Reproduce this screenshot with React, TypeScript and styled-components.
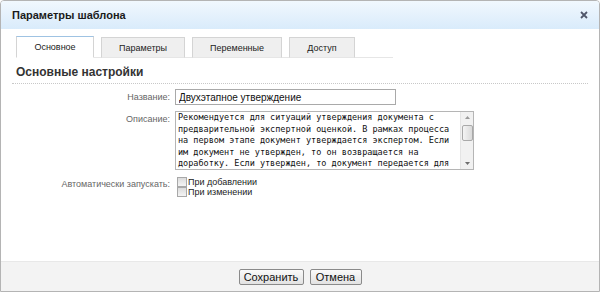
import styled, { createGlobalStyle } from 'styled-components';

const GlobalStyle = createGlobalStyle`
  html, body {
    margin: 0;
    padding: 0;
    background: #fff;
  }
  #root {
    width: 600px;
    height: 292px;
  }
`;

const Dialog = styled.div`
  box-sizing: border-box;
  width: 600px;
  height: 292px;
  display: flex;
  flex-direction: column;
  border: 1px solid #b4b4b4;
  border-radius: 4px 4px 0 0;
  overflow: hidden;
  background: #fff;
  font-family: 'Liberation Sans', Arial, sans-serif;
`;

const Header = styled.div`
  height: 28px;
  flex: none;
  display: flex;
  align-items: center;
  justify-content: space-between;
  padding: 0 10px 0 11px;
  background: linear-gradient(#f1f8fe, #d9ebfb);
`;

const Title = styled.div`
  font: bold 11px 'Liberation Sans', Arial, sans-serif;
  color: #1a1a1a;
`;

const CloseButton = styled.button`
  border: 0;
  padding: 0;
  background: none;
  width: 10px;
  height: 10px;
  display: flex;
  align-items: center;
  justify-content: center;
  cursor: pointer;
`;

const Body = styled.div`
  flex: 1;
  display: flex;
  flex-direction: column;
`;

const TabRow = styled.div`
  display: flex;
  align-items: flex-end;
  gap: 7px;
  margin: 7px 0 0 15px;
  width: 377px;
  border-bottom: 1px solid #e6e6e6;
`;

const Tab = styled.div<{ $active?: boolean; $w: number }>`
  box-sizing: border-box;
  width: ${(p) => p.$w}px;
  height: ${(p) => (p.$active ? 22 : 21)}px;
  margin-bottom: -1px;
  display: flex;
  align-items: center;
  justify-content: center;
  font-size: 9px;
  color: #222;
  background: ${(p) => (p.$active ? '#fff' : '#efefef')};
  border: 1px solid #d4d4d4;
  border-top-color: ${(p) => (p.$active ? '#9fc3e3' : '#d4d4d4')};
  border-bottom-color: ${(p) => (p.$active ? '#fff' : '#e6e6e6')};
`;

const SectionTitle = styled.h2`
  margin: 7px 11px 0;
  padding: 0 0 3px 4px;
  font: bold 12px 'Liberation Sans', Arial, sans-serif;
  color: #333;
  border-bottom: 1px dotted #c8c8c8;
  line-height: 15px;
`;

const Form = styled.div`
  display: grid;
  grid-template-columns: 169px 1fr;
  column-gap: 5px;
  row-gap: 6px;
  margin-top: 5px;
  align-items: start;
`;

const Label = styled.label`
  text-align: right;
  font-size: 9px;
  color: #666;
  line-height: 16px;
`;

const TextInput = styled.input`
  box-sizing: border-box;
  width: 221px;
  height: 16px;
  margin: 0;
  padding: 0 3px;
  border: 1px solid #a9a9a9;
  font: 10px 'Liberation Sans', Arial, sans-serif;
  color: #111;
  outline: none;
`;

const AreaWrap = styled.div`
  position: relative;
  width: 299px;
  height: 59px;
`;

const TextArea = styled.textarea`
  box-sizing: border-box;
  display: block;
  width: 100%;
  height: 100%;
  margin: 0;
  padding: 0 15px 0 2px;
  border: 1px solid #b5b5b5;
  font: 8.5px/11.6px 'DejaVu Sans Mono', 'Liberation Mono', monospace;
  color: #111;
  resize: none;
  outline: none;
  overflow: hidden;
`;

const ScrollTrack = styled.div`
  position: absolute;
  top: 1px;
  right: 1px;
  bottom: 1px;
  width: 12px;
  display: flex;
  flex-direction: column;
  align-items: center;
  background: #f1f1f1;
  border-left: 1px solid #e4e4e4;
`;

const ScrollArrow = styled.div`
  flex: none;
  height: 11px;
  width: 100%;
  display: flex;
  align-items: center;
  justify-content: center;
`;

const ScrollThumb = styled.div`
  box-sizing: border-box;
  flex: none;
  width: 11px;
  height: 16px;
  margin-top: 2px;
  border: 1px solid #a9a9a9;
  border-radius: 2px;
  background: linear-gradient(90deg, #f4f4f4, #dadada);
`;

const ScrollGap = styled.div`
  flex: 1;
`;

const Checks = styled.div`
  display: flex;
  flex-direction: column;
  padding-top: 1px;
`;

const CheckLabel = styled.label`
  display: flex;
  align-items: center;
  height: 10px;
  font-size: 9px;
  color: #222;
`;

const Box = styled.input`
  appearance: none;
  box-sizing: border-box;
  width: 10px;
  height: 10px;
  margin: 0 1px 0 2px;
  border: 1px solid #a8a8a8;
  background: linear-gradient(#dcdcdc, #f4f4f4);
`;

const Footer = styled.div`
  flex: none;
  height: 29px;
  display: flex;
  align-items: center;
  justify-content: center;
  gap: 6px;
  background: #f3f3f3;
  border-top: 1px solid #e8e8e8;
`;

const Button = styled.button<{ $w: number }>`
  box-sizing: border-box;
  width: ${(p) => p.$w}px;
  height: 16px;
  padding: 0;
  border: 1px solid #8a8a8a;
  border-radius: 2px;
  background: linear-gradient(#fafafa, #e2e2e2);
  font: 11px 'Liberation Sans', Arial, sans-serif;
  color: #111;
  line-height: 14px;
`;

const tabs = [
  { title: 'Основное', w: 78 },
  { title: 'Параметры', w: 84 },
  { title: 'Переменные', w: 90 },
  { title: 'Доступ', w: 66 },
];

const description =
  'Рекомендуется для ситуаций утверждения документа с предварительной экспертной оценкой. В рамках процесса на первом этапе документ утверждается экспертом. Если им документ не утвержден, то он возвращается на доработку. Если утвержден, то документ передается для утверждения руководителю. Руководитель может утвердить документ или вернуть его на доработку автору. После утверждения руководителем документ переходит в статус утвержденного и становится доступен для дальнейшей работы всем участникам процесса.';

export default function App() {
  return (
    <>
      <GlobalStyle />
      <Dialog>
        <Header>
          <Title>Параметры шаблона</Title>
          <CloseButton aria-label="Закрыть">
            <svg width="8" height="8" viewBox="0 0 8 8">
              <path d="M1 1L7 7M7 1L1 7" stroke="#50566a" strokeWidth="1.8" />
            </svg>
          </CloseButton>
        </Header>
        <Body>
          <TabRow>
            {tabs.map((t, i) => (
              <Tab key={t.title} $w={t.w} $active={i === 0}>
                {t.title}
              </Tab>
            ))}
          </TabRow>
          <SectionTitle>Основные настройки</SectionTitle>
          <Form>
            <Label>Название:</Label>
            <TextInput defaultValue="Двухэтапное утверждение" />
            <Label>Описание:</Label>
            <AreaWrap>
              <TextArea defaultValue={description} />
              <ScrollTrack>
                <ScrollArrow>
                  <svg width="5" height="3" viewBox="0 0 5 3">
                    <path d="M0 3L2.5 0L5 3Z" fill="#9a9a9a" />
                  </svg>
                </ScrollArrow>
                <ScrollThumb />
                <ScrollGap />
                <ScrollArrow>
                  <svg width="5" height="3" viewBox="0 0 5 3">
                    <path d="M0 0L2.5 3L5 0Z" fill="#6e6e6e" />
                  </svg>
                </ScrollArrow>
              </ScrollTrack>
            </AreaWrap>
            <Label>Автоматически запускать:</Label>
            <Checks>
              <CheckLabel>
                <Box type="checkbox" />
                При добавлении
              </CheckLabel>
              <CheckLabel>
                <Box type="checkbox" />
                При изменении
              </CheckLabel>
            </Checks>
          </Form>
        </Body>
        <Footer>
          <Button $w={65}>Сохранить</Button>
          <Button $w={52}>Отмена</Button>
        </Footer>
      </Dialog>
    </>
  );
}
